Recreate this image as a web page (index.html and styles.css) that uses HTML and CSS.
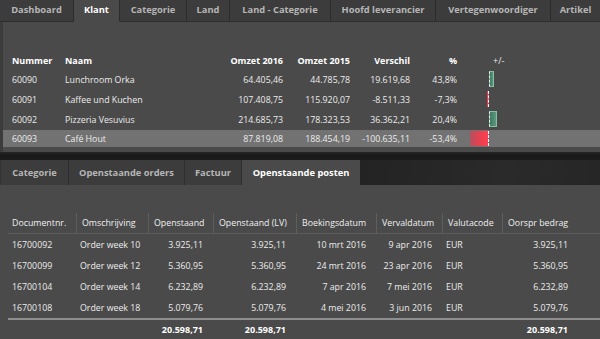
FILE: index.html
```html
<!DOCTYPE html>
<html lang="nl">
<head>
<meta charset="utf-8">
<title>Klant</title>
<link rel="stylesheet" href="styles.css">
</head>
<body>
<div class="app">
  <nav class="tabs top-tabs">
    <div class="tab w-dash">Dashboard</div>
    <div class="tab active w-klant">Klant</div>
    <div class="tab w-cat">Categorie</div>
    <div class="tab w-land">Land</div>
    <div class="tab w-landcat">Land - Categorie</div>
    <div class="tab w-hoofd">Hoofd leverancier</div>
    <div class="tab w-verteg">Vertegenwoordiger</div>
    <div class="tab w-art">Artikel</div>
  </nav>

  <section class="panel top-panel">
    <div class="top-grid">
      <div class="row head">
        <div class="c c1">Nummer</div>
        <div class="c c2">Naam</div>
        <div class="c num">Omzet 2016</div>
        <div class="c num">Omzet 2015</div>
        <div class="c num">Verschil</div>
        <div class="c num">%</div>
        <div class="c pm">+/-</div>
      </div>
      <div class="row">
        <div class="c c1">60090</div>
        <div class="c c2">Lunchroom Orka</div>
        <div class="c num">64.405,46</div>
        <div class="c num">44.785,78</div>
        <div class="c num">19.619,68</div>
        <div class="c num">43,8%</div>
        <div class="c bars"><div class="neg"></div><div class="pos"><span class="bar up" style="width:5px"></span></div></div>
      </div>
      <div class="row">
        <div class="c c1">60091</div>
        <div class="c c2">Kaffee und Kuchen</div>
        <div class="c num">107.408,75</div>
        <div class="c num">115.920,07</div>
        <div class="c num">-8.511,33</div>
        <div class="c num">-7,3%</div>
        <div class="c bars"><div class="neg"><span class="bar down" style="width:2px"></span></div><div class="pos"></div></div>
      </div>
      <div class="row">
        <div class="c c1">60092</div>
        <div class="c c2">Pizzeria Vesuvius</div>
        <div class="c num">214.685,73</div>
        <div class="c num">178.323,53</div>
        <div class="c num">36.362,21</div>
        <div class="c num">20,4%</div>
        <div class="c bars"><div class="neg"></div><div class="pos"><span class="bar up" style="width:8px"></span></div></div>
      </div>
      <div class="row sel">
        <div class="c c1">60093</div>
        <div class="c c2">Café Hout</div>
        <div class="c num">87.819,08</div>
        <div class="c num">188.454,19</div>
        <div class="c num">-100.635,11</div>
        <div class="c num">-53,4%</div>
        <div class="c bars"><div class="neg"><span class="bar down big" style="width:19px"></span></div><div class="pos"></div></div>
      </div>
    </div>
  </section>

  <div class="divider"></div>

  <nav class="tabs bottom-tabs">
    <div class="tab b-cat">Categorie</div>
    <div class="tab b-orders">Openstaande orders</div>
    <div class="tab b-fact">Factuur</div>
    <div class="tab active b-posten">Openstaande posten</div>
    <div class="tab-fill"></div>
  </nav>

  <section class="panel bottom-panel">
    <div class="doc-grid">
      <div class="drow dhead">
        <div class="d">Documentnr.</div>
        <div class="d sep">Omschrijving</div>
        <div class="d sep">Openstaand</div>
        <div class="d sep">Openstaand (LV)</div>
        <div class="d sep">Boekingsdatum</div>
        <div class="d sep">Vervaldatum</div>
        <div class="d sep">Valutacode</div>
        <div class="d sep">Oorspr bedrag</div>
        <div class="d"></div>
      </div>
      <div class="drow">
        <div class="d">16700092</div>
        <div class="d">Order week 10</div>
        <div class="d r">3.925,11</div>
        <div class="d r">3.925,11</div>
        <div class="d r">10 mrt 2016</div>
        <div class="d r">9 apr 2016</div>
        <div class="d">EUR</div>
        <div class="d r">3.925,11</div>
        <div class="d"></div>
      </div>
      <div class="drow">
        <div class="d">16700099</div>
        <div class="d">Order week 12</div>
        <div class="d r">5.360,95</div>
        <div class="d r">5.360,95</div>
        <div class="d r">24 mrt 2016</div>
        <div class="d r">23 apr 2016</div>
        <div class="d">EUR</div>
        <div class="d r">5.360,95</div>
        <div class="d"></div>
      </div>
      <div class="drow">
        <div class="d">16700104</div>
        <div class="d">Order week 14</div>
        <div class="d r">6.232,89</div>
        <div class="d r">6.232,89</div>
        <div class="d r">7 apr 2016</div>
        <div class="d r">7 mei 2016</div>
        <div class="d">EUR</div>
        <div class="d r">6.232,89</div>
        <div class="d"></div>
      </div>
      <div class="drow">
        <div class="d">16700108</div>
        <div class="d">Order week 18</div>
        <div class="d r">5.079,76</div>
        <div class="d r">5.079,76</div>
        <div class="d r">4 mei 2016</div>
        <div class="d r">3 jun 2016</div>
        <div class="d">EUR</div>
        <div class="d r">5.079,76</div>
        <div class="d"></div>
      </div>
      <div class="drow dtotal">
        <div class="d"></div>
        <div class="d"></div>
        <div class="d r">20.598,71</div>
        <div class="d r">20.598,71</div>
        <div class="d"></div>
        <div class="d"></div>
        <div class="d"></div>
        <div class="d r">20.598,71</div>
        <div class="d"></div>
      </div>
    </div>
  </section>
</div>
</body>
</html>
```

FILE: styles.css
```css
* { box-sizing: border-box; }
html, body { margin: 0; padding: 0; }
body {
  background: #1e1e1e;
  font-family: "Open Sans", "Noto Sans", sans-serif;
  font-size: 8.8px;
  color: #ececec;
  width: 600px;
  height: 339px;
  overflow: hidden;
}
.app { display: flex; flex-direction: column; width: 600px; height: 339px; }

/* tabs */
.tabs { display: flex; flex: none; }
.tab {
  display: flex; align-items: center; justify-content: center;
  background: #3c3c3c;
  color: #b6b6b6;
  font-weight: 700;
  font-size: 9.3px;
  border-right: 1px solid #2c2c2c;
  border-bottom: 1px solid #2e2e2e;
  white-space: nowrap;
}
.tab.active { background: #4a4a4a; color: #ffffff; border-bottom-color: #4a4a4a; }
.top-tabs { height: 22px; }
.top-tabs .tab { padding-bottom: 2px; }
.w-dash { width: 74px; }
.w-klant { width: 46px; }
.w-cat { width: 67px; }
.w-land { width: 43px; }
.w-landcat { width: 101px; }
.w-hoofd { width: 105px; }
.w-verteg { width: 115px; }
.w-art { flex: 1; border-right: none; }

.bottom-tabs { height: 25px; }
.bottom-tabs .tab { border-bottom: none; padding-bottom: 1px; border-right-color: #2e2e2e; }
.b-cat { width: 69px; border-left: 1px solid #333333; }
.b-orders { width: 116px; }
.b-fact { width: 57px; }
.b-posten { width: 118px; border-right: none; }
.tab-fill { flex: 1; background: linear-gradient(100deg, #232323 0%, #2a2a2a 60%, #262626 100%); }

/* panels */
.panel { background: #4a4a4a; }
.top-panel {
  height: 130px;
  border-left: 3px solid #3c3c3c;
  padding-top: 28px;
}
.divider {
  flex: none;
  height: 8px;
  background: linear-gradient(#262626, #191919 40%, #1c1c1c);
}
.bottom-panel { flex: 1; padding-top: 28px; }

/* top table */
.row {
  display: grid;
  grid-template-columns: 62px 158px 60px 67px 60px 47px 1fr;
  height: 20px;
  align-items: center;
}
.row.head { font-size: 9px; }
.row.sel { height: 17px; background: #727272; }
.row.head { font-weight: 700; color: #ffffff; }
.c { white-space: nowrap; }
.c1 { padding-left: 9px; }
.num { text-align: right; }
.pm { padding-left: 36px; font-weight: 400; color: #e8e8e8; }
.bars { display: flex; align-self: stretch; padding: 1px 0 1px 0; }
.neg { width: 32px; display: flex; justify-content: flex-end; }
.pos { flex: 1; display: flex; }
.bar { display: block; height: 16px; }
.sel .bar { height: 15px; }
.bar.up {
  background: linear-gradient(90deg, #3f7a62, #5a987f);
  border: 1px solid #86bea4;
  border-left: 1px dashed #e8f2ee;
}
.bar.down {
  background: #e8384d;
  border-right: 1px dashed #f4f4f4;
}
.bar.down.big { background: linear-gradient(90deg, #b3515f, #e8404f 55%, #ff4053); }

/* bottom table */
.doc-grid { margin-left: 8px; }
.drow {
  display: grid;
  grid-template-columns: 68px 72px 65px 83px 80px 66px 60px 76px 1fr;
  height: 21px;
  align-items: center;
}
.dhead { height: 21px; align-items: stretch; border-bottom: 1px solid #5c5c5c; }
.dhead .d { display: flex; align-items: center; padding-left: 5px; color: #f0f0f0; }
.dhead .d:first-child { padding-left: 4px; }
.dhead .sep { border-left: 1px solid #5e5e5e; }
.d { white-space: nowrap; padding-left: 4px; }
.d.r { text-align: right; padding-right: 10px; padding-left: 0; }
.dtotal { border-top: 2px solid #8e8e8e; height: 20px; font-weight: 700; color: #ffffff; font-size: 9px; }
```
